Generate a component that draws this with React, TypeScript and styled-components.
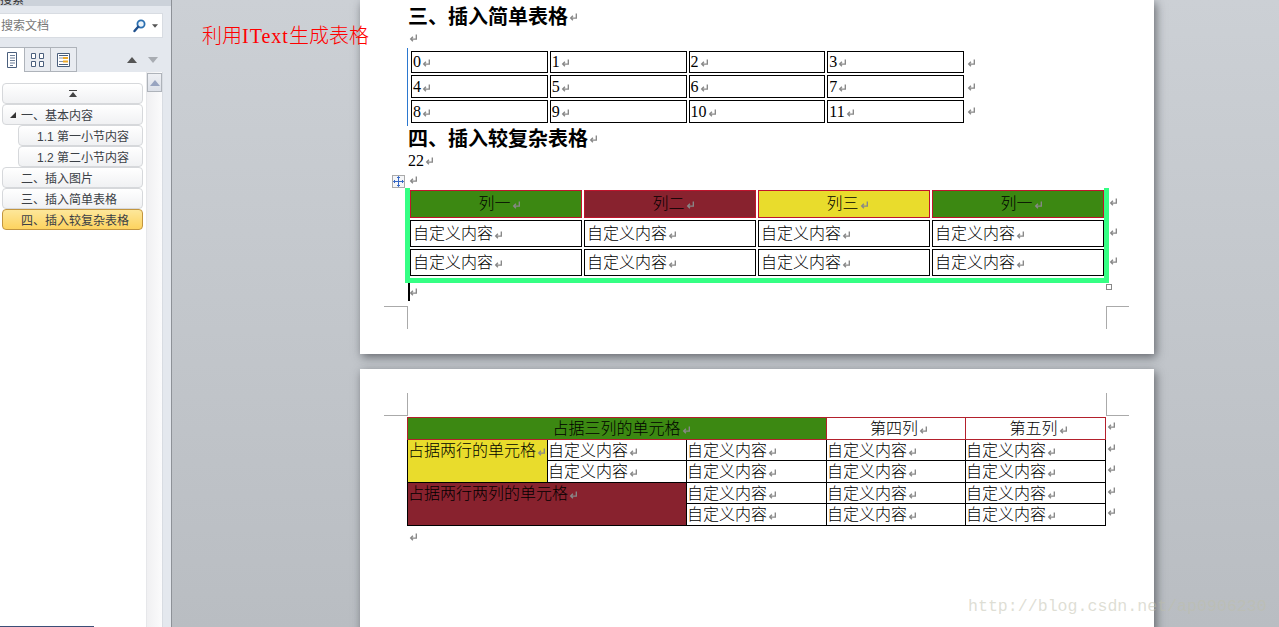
import styled, { createGlobalStyle } from "styled-components";

const GlobalStyle = createGlobalStyle`
  html, body {
    margin: 0;
    height: 100%;
    overflow: hidden;
    background: #c2c6cb;
  }
  #root {
    height: 100%;
  }
`;

const Shell = styled.div`
  position: relative;
  display: flex;
  width: 1279px;
  height: 627px;
  overflow: hidden;
  font-family: "Liberation Serif", "Noto Sans CJK SC", serif;
  font-weight: 300;
  color: #000;
`;

/* left navigation pane */
const Sidebar = styled.aside`
  display: flex;
  flex-direction: column;
  flex: 0 0 172px;
  height: 627px;
  box-sizing: border-box;
  padding-right: 8px;
  background: #e4e8ee;
  border-right: 1px solid #8d9197;
  font-family: "Liberation Sans", "Noto Sans CJK SC", sans-serif;
  font-weight: 400;
`;
const PaneTitle = styled.div`
  height: 6px;
  margin-right: -8px;
  background: #ccd2da;
  overflow: hidden;
  font-size: 12px;
  line-height: 0;
  color: #333;
`;
const SearchBox = styled.div`
  display: flex;
  align-items: center;
  justify-content: space-between;
  height: 25px;
  box-sizing: border-box;
  margin-top: 7px;
  padding: 0 4px 3px 1px;
  background: #fff;
  border: 1px solid #d8dce2;
  border-left: 0;
  font-size: 12px;
  color: #777;
`;
const SearchActions = styled.div`
  display: flex;
  align-items: center;
  gap: 6px;
  padding-top: 3px;
`;
const TabBar = styled.div`
  display: flex;
  align-items: flex-end;
  height: 25px;
  margin-top: 9px;
`;
const Tab = styled.div<{ $active?: boolean }>`
  display: flex;
  align-items: center;
  justify-content: center;
  width: ${(p) => (p.$active ? "25px" : "26px")};
  height: 25px;
  box-sizing: border-box;
  background: ${(p) => (p.$active ? "#fff" : "#e9ecf1")};
  border: 1px solid #aeb3ba;
  border-left: ${(p) => (p.$active ? "0" : "none")};
  border-bottom: ${(p) => (p.$active ? "0" : "1px solid #aeb3ba")};
`;
const Stepper = styled.div`
  display: flex;
  gap: 11px;
  align-items: center;
  margin-left: auto;
  height: 25px;
  padding-right: 5px;
`;
const TreePane = styled.div`
  display: flex;
  flex: 1;
  min-height: 0;
  background: #fff;
  border-right: 1px solid #d8dce2;
`;
const TreeList = styled.div`
  flex: 1;
  padding: 11px 3px 0 2px;
`;
const TreeItem = styled.div<{ $child?: boolean; $selected?: boolean }>`
  display: flex;
  align-items: center;
  height: 21px;
  box-sizing: border-box;
  margin-left: ${(p) => (p.$child ? "16px" : "0")};
  padding-left: 18px;
  border: 1px solid ${(p) => (p.$selected ? "#c2953f" : "#d6d8db")};
  border-radius: 4px;
  background: ${(p) =>
    p.$selected
      ? "linear-gradient(#fde79a, #fdd35f)"
      : "linear-gradient(#ffffff, #f0f1f3)"};
  font-size: 12px;
  color: #3b4046;
  white-space: nowrap;
`;
const TopItem = styled(TreeItem)`
  justify-content: center;
  padding-left: 0;
`;
const Expander = styled.span`
  margin-left: -11px;
  margin-right: 5px;
  width: 0;
  height: 0;
  border-style: solid;
  border-width: 0 0 6px 6px;
  border-color: transparent transparent #333 transparent;
`;
const ScrollTrack = styled.div`
  display: flex;
  flex-direction: column;
  width: 16px;
  background: linear-gradient(90deg, #f0f0f2, #fbfbfc);
  border-left: 1px solid #e6e7ea;
  box-sizing: border-box;
`;
const ScrollButton = styled.div`
  display: flex;
  align-items: center;
  justify-content: center;
  height: 17px;
  margin-top: 1px;
  background: linear-gradient(#eef0f4, #dce0e8);
  border: 1px solid #aeb3ba;
`;
const StatusEdge = styled.div`
  position: absolute;
  left: 0;
  bottom: 0;
  width: 94px;
  height: 1px;
  background: #3b4f78;
`;

/* document area */
const Workspace = styled.main`
  flex: 1;
  display: flex;
  flex-direction: column;
  gap: 15px;
  padding-left: 188px;
  background: linear-gradient(#ccd0d5, #b9bdc2);
  min-width: 0;
`;
const Page = styled.section<{ $height: number; $top?: number }>`
  position: relative;
  flex: 0 0 ${(p) => p.$height}px;
  width: 794px;
  box-sizing: border-box;
  padding: ${(p) => p.$top ?? 0}px 0 0 48px;
  background: #fff;
  box-shadow: 2px 3px 9px rgba(50, 54, 60, 0.65);
`;
const Heading = styled.h2<{ $gap?: number }>`
  display: flex;
  align-items: center;
  height: 22px;
  margin: ${(p) => p.$gap ?? 0}px 0 0 0;
  font-size: 20px;
  font-weight: 700;
  line-height: 22px;
`;
const Line = styled.div<{ $height: number }>`
  display: flex;
  align-items: center;
  height: ${(p) => p.$height}px;
  font-size: 16px;
`;
const MarkIcon = styled.svg`
  flex: none;
  display: inline-block;
  width: 9px;
  height: 9px;
  margin-left: 1px;
  vertical-align: -1px;
`;

const SimpleWrap = styled.div`
  display: flex;
  align-items: center;
  width: 570px;
  margin-left: -1px;
  border-left: 1px solid #2b78d0;
`;
const SimpleTable = styled.table`
  border-collapse: separate;
  border-spacing: 2px;
  table-layout: fixed;
  width: 557px;
  margin: 1px 0 1px 1px;
`;
const SimpleCell = styled.td<{ $first?: boolean }>`
  height: ${(p) => (p.$first ? 20 : 21)}px;
  padding: 0 0 0 1px;
  border: 1px solid #000;
  font-size: 16px;
  line-height: 18px;
  white-space: nowrap;
`;
const RowMarks = styled.div<{ $gap: number }>`
  display: flex;
  flex-direction: column;
  gap: ${(p) => p.$gap}px;
`;

const FancyRow = styled.div`
  display: flex;
  align-items: flex-start;
  margin-left: -3px;
`;
const FancyFrame = styled.div`
  position: relative;
  width: 704px;
  box-sizing: border-box;
  padding-top: 2px;
  border: 5px solid #35ff84;
  border-top: 0;
`;
const FancyTable = styled.table`
  border-collapse: separate;
  border-spacing: 2px 2px;
  table-layout: fixed;
  width: 698px;
  margin: -2px -2px 0 -2px;
`;
const FancyHead = styled.td<{ $bg: string }>`
  height: 28px;
  padding: 0 0 0 7px;
  box-sizing: border-box;
  border: 1px solid #c0142c;
  background: ${(p) => p.$bg};
  font-size: 16px;
  line-height: 18px;
  text-align: center;
`;
const FancyCell = styled.td`
  height: 27px;
  padding: 0 0 0 2px;
  box-sizing: border-box;
  border: 1px solid #000;
  font-size: 16px;
  line-height: 18px;
  white-space: nowrap;
`;
const FancyMarks = styled(RowMarks)`
  padding-top: 10px;
  margin-left: -1px;
`;
const MoveHandle = styled.div`
  position: absolute;
  left: 32px;
  top: 175px;
  display: flex;
  align-items: center;
  justify-content: center;
  width: 13px;
  height: 13px;
  box-sizing: border-box;
  background: #f5f6f8;
  border: 1px solid #aaa;
`;
const ResizeHandle = styled.div`
  position: absolute;
  left: 746px;
  top: 284px;
  width: 6px;
  height: 6px;
  box-sizing: border-box;
  background: #fff;
  border: 1px solid #888;
`;
const Caret = styled.span`
  position: absolute;
  left: 48px;
  top: 283px;
  width: 2px;
  height: 18px;
  background: #000;
`;
const CropMark = styled.span<{ $x: number; $y: number; $sides: string }>`
  position: absolute;
  left: ${(p) => p.$x}px;
  top: ${(p) => p.$y}px;
  width: 23px;
  height: 23px;
  box-sizing: border-box;
  ${(p) => (p.$sides.includes("t") ? "border-top: 1px solid #aaa;" : "")}
  ${(p) => (p.$sides.includes("b") ? "border-bottom: 1px solid #aaa;" : "")}
  ${(p) => (p.$sides.includes("l") ? "border-left: 1px solid #aaa;" : "")}
  ${(p) => (p.$sides.includes("r") ? "border-right: 1px solid #aaa;" : "")}
`;

const SpanRow = styled.div`
  display: flex;
  align-items: flex-start;
  margin-left: -1px;
`;
const SpanTable = styled.table`
  border-collapse: collapse;
  table-layout: fixed;
  width: 698px;
  font-size: 16px;
`;
const SpanCell = styled.td<{ $bg?: string; $red?: boolean; $pad?: number; $h?: number }>`
  height: ${(p) => p.$h ?? 20}px;
  padding: 2px 0 0 ${(p) => p.$pad ?? 0}px;
  box-sizing: content-box;
  border: 1px solid ${(p) => (p.$red ? "#b3202c" : "#000")};
  background: ${(p) => p.$bg ?? "#fff"};
  text-align: ${(p) => (p.$pad ? "center" : "left")};
  vertical-align: top;
  line-height: 18px;
  white-space: nowrap;
`;
const SpanMarks = styled(RowMarks)`
  padding: 5px 0 0 0;
`;

const Annotation = styled.div`
  position: absolute;
  left: 202px;
  top: 23px;
  font-size: 20px;
  line-height: 24px;
  color: #ff0000;
  white-space: nowrap;
  font-family: "Noto Sans CJK SC", sans-serif;
  font-weight: 300;
`;
const AnnotationLatin = styled.span`
  font-family: "Liberation Serif", serif;
  font-size: 20px;
  letter-spacing: 1px;
`;
const Watermark = styled.div`
  position: absolute;
  left: 968px;
  top: 597px;
  font-family: "Liberation Mono", monospace;
  font-size: 16.6px;
  line-height: 20px;
  color: rgba(190, 190, 170, 0.5);
  white-space: nowrap;
`;

function Mark() {
  return (
    <MarkIcon viewBox="0 0 8 8">
      <path d="M6.5 0.5V4.5H1.5M3.5 2.5L1.5 4.5L3.5 6.5" fill="none" stroke="#888" strokeWidth="1.2" />
    </MarkIcon>
  );
}

function SearchGlass() {
  return (
    <svg width="13" height="14" viewBox="0 0 13 14">
      <circle cx="8" cy="5" r="3.6" fill="#eaf3fb" stroke="#2a6fb0" strokeWidth="1.8" />
      <path d="M5.2 7.8L1.5 12" stroke="#1f4f8c" strokeWidth="2.4" strokeLinecap="round" />
    </svg>
  );
}

function Triangle({ up, color, size = 5 }: { up?: boolean; color: string; size?: number }) {
  return (
    <svg width={size * 2} height={size + 1} viewBox="0 0 10 6">
      <path d={up ? "M5 0L10 6H0Z" : "M0 0H10L5 6Z"} fill={color} />
    </svg>
  );
}

function PagesIcon() {
  return (
    <svg width="10" height="16" viewBox="0 0 10 16">
      <path d="M0.5 0.5H9.5V15.5H0.5Z" fill="#fff" stroke="#4a5f7d" />
      <path d="M3 3.5H8M3 6H8M3 8.5H8M3 11H8M3 13.5H6" stroke="#6d7f98" />
    </svg>
  );
}

function ThumbsIcon() {
  return (
    <svg width="13" height="14" viewBox="0 0 13 14">
      <path d="M0.5 0.5H4.5V5.5H0.5ZM8.5 0.5H12.5V5.5H8.5ZM0.5 8.5H4.5V13.5H0.5ZM8.5 8.5H12.5V13.5H8.5Z" fill="#fff" stroke="#4a5f7d" />
    </svg>
  );
}

function ResultsIcon() {
  return (
    <svg width="13" height="14" viewBox="0 0 13 14">
      <path d="M0.5 0.5H12.5V13.5H0.5Z" fill="#fff" stroke="#4a5f7d" />
      <path d="M2 2.5H11M2 11.5H11" stroke="#4a5f7d" />
      <path d="M2 5H7M2 8.5H7" stroke="#8794a8" />
      <path d="M6 4H11V6H6ZM6 7.5H11V9.5H6Z" fill="#eda92a" />
    </svg>
  );
}

function MoveIcon() {
  return (
    <svg width="11" height="11" viewBox="0 0 11 11">
      <path d="M5.5 0.5V10.5M0.5 5.5H10.5M4 2L5.5 0.5L7 2M4 9L5.5 10.5L7 9M2 4L0.5 5.5L2 7M9 4L10.5 5.5L9 7" fill="none" stroke="#3567c4" />
    </svg>
  );
}

const simpleRows = [
  ["0", "1", "2", "3"],
  ["4", "5", "6", "7"],
  ["8", "9", "10", "11"],
];
const headCells = [
  { label: "列一", bg: "#3c8812" },
  { label: "列二", bg: "#88222e" },
  { label: "列三", bg: "#e9dc2c" },
  { label: "列一", bg: "#3c8812" },
];
const CUSTOM = "自定义内容";

function CustomCell({ h }: { h?: number }) {
  return (
    <SpanCell $h={h}>
      {CUSTOM}
      <Mark />
    </SpanCell>
  );
}

export default function App() {
  return (
    <Shell>
      <GlobalStyle />
      <Sidebar>
        <PaneTitle>搜索</PaneTitle>
        <SearchBox>
          搜索文档
          <SearchActions>
            <SearchGlass />
            <Triangle color="#555" size={3} />
          </SearchActions>
        </SearchBox>
        <TabBar>
          <Tab $active>
            <PagesIcon />
          </Tab>
          <Tab>
            <ThumbsIcon />
          </Tab>
          <Tab>
            <ResultsIcon />
          </Tab>
          <Stepper>
            <Triangle up color="#555" />
            <Triangle color="#a8acb2" />
          </Stepper>
        </TabBar>
        <TreePane>
          <TreeList>
            <TopItem>
              <svg width="8" height="7" viewBox="0 0 8 7">
                <path d="M0 0H8V1H0ZM4 2L8 7H0Z" fill="#444" />
              </svg>
            </TopItem>
            <TreeItem>
              <Expander />
              一、基本内容
            </TreeItem>
            <TreeItem $child>1.1 第一小节内容</TreeItem>
            <TreeItem $child>1.2 第二小节内容</TreeItem>
            <TreeItem>二、插入图片</TreeItem>
            <TreeItem>三、插入简单表格</TreeItem>
            <TreeItem $selected>四、插入较复杂表格</TreeItem>
          </TreeList>
          <ScrollTrack>
            <ScrollButton>
              <Triangle up color="#98a4c0" />
            </ScrollButton>
          </ScrollTrack>
        </TreePane>
      </Sidebar>
      <StatusEdge />

      <Workspace>
        <Page $height={354} $top={6}>
          <Heading>
            三、插入简单表格
            <Mark />
          </Heading>
          <Line $height={20}>
            <Mark />
          </Line>
          <SimpleWrap>
            <SimpleTable>
              <tbody>
                {simpleRows.map((row, i) => (
                  <tr key={row[0]}>
                    {row.map((cell) => (
                      <SimpleCell key={cell} $first={i === 0}>
                        {cell}
                        <Mark />
                      </SimpleCell>
                    ))}
                  </tr>
                ))}
              </tbody>
            </SimpleTable>
            <RowMarks $gap={15}>
              <Mark />
              <Mark />
              <Mark />
            </RowMarks>
          </SimpleWrap>
          <Heading $gap={2}>
            四、插入较复杂表格
            <Mark />
          </Heading>
          <Line $height={22}>
            22
            <Mark />
          </Line>
          <Line $height={16}>
            <Mark />
          </Line>
          <MoveHandle>
            <MoveIcon />
          </MoveHandle>
          <FancyRow>
            <FancyFrame>
              <FancyTable>
                <tbody>
                  <tr>
                    {headCells.map((cell, i) => (
                      <FancyHead key={i} $bg={cell.bg}>
                        {cell.label}
                        <Mark />
                      </FancyHead>
                    ))}
                  </tr>
                  {[0, 1].map((row) => (
                    <tr key={row}>
                      {[0, 1, 2, 3].map((col) => (
                        <FancyCell key={col}>
                          {CUSTOM}
                          <Mark />
                        </FancyCell>
                      ))}
                    </tr>
                  ))}
                </tbody>
              </FancyTable>
            </FancyFrame>
            <FancyMarks $gap={20.5}>
              <Mark />
              <Mark />
              <Mark />
            </FancyMarks>
          </FancyRow>
          <Line $height={18}>
            <Mark />
          </Line>
          <Caret />
          <ResizeHandle />
          <CropMark $x={24} $y={306} $sides="t" />
          <CropMark $x={47} $y={306} $sides="l" />
          <CropMark $x={746} $y={306} $sides="lt" />
        </Page>

        <Page $height={300} $top={48}>
          <CropMark $x={47} $y={24} $sides="l" />
          <CropMark $x={24} $y={24} $sides="b" />
          <CropMark $x={746} $y={24} $sides="lb" />
          <SpanRow>
            <SpanTable>
              <colgroup>
                <col width="140" />
                <col width="139" />
                <col width="140" />
                <col width="139" />
                <col width="140" />
              </colgroup>
              <tbody>
                <tr>
                  <SpanCell colSpan={3} $bg="#3c8812" $red $pad={9} $h={19}>
                    占据三列的单元格
                    <Mark />
                  </SpanCell>
                  <SpanCell $red $pad={6} $h={19}>
                    第四列
                    <Mark />
                  </SpanCell>
                  <SpanCell $red $pad={6} $h={19}>
                    第五列
                    <Mark />
                  </SpanCell>
                </tr>
                <tr>
                  <SpanCell rowSpan={2} $bg="#e9dc2c" $h={39}>
                    占据两行的单元格
                    <Mark />
                  </SpanCell>
                  <CustomCell h={18} />
                  <CustomCell h={18} />
                  <CustomCell h={18} />
                  <CustomCell h={18} />
                </tr>
                <tr>
                  <CustomCell h={19} />
                  <CustomCell h={19} />
                  <CustomCell h={19} />
                  <CustomCell h={19} />
                </tr>
                <tr>
                  <SpanCell rowSpan={2} colSpan={2} $bg="#88222e" $h={39}>
                    占据两行两列的单元格
                    <Mark />
                  </SpanCell>
                  <CustomCell h={18} />
                  <CustomCell h={18} />
                  <CustomCell h={18} />
                </tr>
                <tr>
                  <CustomCell h={19} />
                  <CustomCell h={19} />
                  <CustomCell h={19} />
                </tr>
              </tbody>
            </SpanTable>
            <SpanMarks $gap={12.5}>
              <Mark />
              <Mark />
              <Mark />
              <Mark />
              <Mark />
            </SpanMarks>
          </SpanRow>
          <Line $height={22}>
            <Mark />
          </Line>
        </Page>
      </Workspace>

      <Annotation>
        利用<AnnotationLatin>IText</AnnotationLatin>生成表格
      </Annotation>
      <Watermark>http://blog.csdn.net/ap0906230</Watermark>
    </Shell>
  );
}
